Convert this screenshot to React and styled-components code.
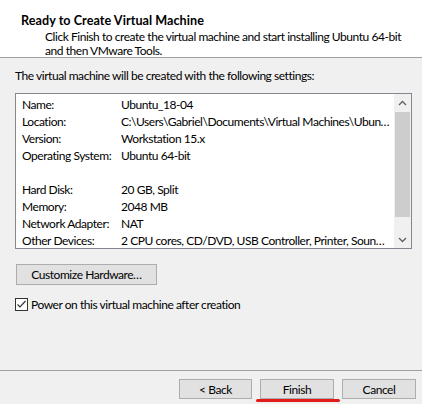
import React from "react";
import styled, { createGlobalStyle } from "styled-components";

const Global = createGlobalStyle`
  html, body { margin: 0; padding: 0; background: #f0f0f0; }
  body { font-family: Lato, "Noto Sans", sans-serif; font-size: 12px; letter-spacing: -0.45px; color: #000; }
`;

const Window = styled.div`
  width: 422px;
  height: 404px;
  display: flex;
  flex-direction: column;
  background: #f0f0f0;
  overflow: hidden;
`;

const Header = styled.header`
  height: 58px;
  box-sizing: border-box;
  background: #fff;
  border-bottom: 1px solid #a0a0a0;
  padding: 12px 0 0 21px;
  flex: none;
`;

const Title = styled.h1`
  margin: 0;
  font-size: 12.6px;
  font-weight: 700;
  letter-spacing: 0.05px;
  line-height: 18px;
  color: #000;
`;

const Desc = styled.p`
  margin: 0 0 0 24px;
  line-height: 14px;
  width: 360px;
`;

const Body = styled.main`
  flex: 1;
  display: flex;
  flex-direction: column;
  padding: 9px 10px 0 15px;
`;

const Intro = styled.div`
  line-height: 17px;
  margin-bottom: 9px;
`;

const ListBox = styled.div`
  height: 156px;
  box-sizing: border-box;
  border: 1px solid #828790;
  background: #fff;
  display: flex;
`;

const Rows = styled.div`
  flex: 1;
  min-width: 0;
  padding: 2px 3px 0 6px;
`;

const Row = styled.div`
  display: grid;
  grid-template-columns: 99px 1fr;
  height: 17px;
  line-height: 17px;
  white-space: nowrap;
`;

const Value = styled.span`
  overflow: hidden;
  text-overflow: ellipsis;
`;

const ScrollBar = styled.div`
  width: 17px;
  flex: none;
  display: flex;
  flex-direction: column;
  background: #f0f0f0;
`;

const Arrow = styled.div`
  height: 17px;
  flex: none;
  display: flex;
  align-items: center;
  justify-content: center;
`;

const Track = styled.div`
  flex: 1;
  display: flex;
  flex-direction: column;
  padding: 1px 1px 14px;
`;

const Thumb = styled.div`
  flex: 1;
  background: #cdcdcd;
`;

const Button = styled.button`
  box-sizing: border-box;
  height: ${(p) => p.$h || 20}px;
  width: ${(p) => p.$w}px;
  background: #e1e1e1;
  border: 1px solid #adadad;
  font-family: inherit;
  font-size: 12px;
  letter-spacing: inherit;
  color: #000;
  padding: 0;
  margin: 0;
`;

const CustomizeRow = styled.div`
  margin-top: 15px;
  padding-left: 1px;
`;

const CheckRow = styled.label`
  display: flex;
  align-items: center;
  gap: 3px;
  margin-top: 12px;
  line-height: 15px;
`;

const CheckBox = styled.span`
  width: 13px;
  height: 13px;
  box-sizing: border-box;
  border: 1px solid #333;
  background: #fff;
  display: flex;
  align-items: center;
  justify-content: center;
`;

const Footer = styled.footer`
  height: 34px;
  flex: none;
  box-sizing: border-box;
  border-top: 1px solid #a0a0a0;
  display: flex;
  justify-content: flex-end;
  gap: 8px;
  padding: 8px 6px 0 0;
`;

const Marked = styled.div`
  position: relative;
`;

const Underline = styled.div`
  position: absolute;
  left: -4px;
  right: -6px;
  top: 20px;
  height: 3px;
  border-radius: 2px;
  background: #e21b1b;
`;

const Up = () => (
  <svg width="9" height="6" viewBox="0 0 9 6">
    <path d="M1 5 L4.5 1.5 L8 5" fill="none" stroke="#606060" strokeWidth="1.3" />
  </svg>
);
const Down = () => (
  <svg width="9" height="6" viewBox="0 0 9 6">
    <path d="M1 1 L4.5 4.5 L8 1" fill="none" stroke="#606060" strokeWidth="1.3" />
  </svg>
);

const settings = [
  ["Name:", "Ubuntu_18-04"],
  ["Location:", "C:\\Users\\Gabriel\\Documents\\Virtual Machines\\Ubuntu_18-04"],
  ["Version:", "Workstation 15.x"],
  ["Operating System:", "Ubuntu 64-bit"],
  ["", ""],
  ["Hard Disk:", "20 GB, Split"],
  ["Memory:", "2048 MB"],
  ["Network Adapter:", "NAT"],
  ["Other Devices:", "2 CPU cores, CD/DVD, USB Controller, Printer, Sound Card"],
];

export default function App() {
  return (
    <Window>
      <Global />
      <Header>
        <Title>Ready to Create Virtual Machine</Title>
        <Desc>
          Click Finish to create the virtual machine and start installing Ubuntu 64-bit and then VMware Tools.
        </Desc>
      </Header>
      <Body>
        <Intro>The virtual machine will be created with the following settings:</Intro>
        <ListBox>
          <Rows>
            {settings.map(([k, v], i) => (
              <Row key={i}>
                <span>{k}</span>
                <Value>{v}</Value>
              </Row>
            ))}
          </Rows>
          <ScrollBar>
            <Arrow><Up /></Arrow>
            <Track><Thumb /></Track>
            <Arrow><Down /></Arrow>
          </ScrollBar>
        </ListBox>
        <CustomizeRow>
          <Button $w={141} $h={21}>Customize Hardware…</Button>
        </CustomizeRow>
        <CheckRow>
          <CheckBox>
            <svg width="11" height="11" viewBox="0 0 11 11">
              <path d="M1.5 5.5 L4 8 L9.5 2" fill="none" stroke="#333" strokeWidth="1.2" />
            </svg>
          </CheckBox>
          Power on this virtual machine after creation
        </CheckRow>
      </Body>
      <Footer>
        <Button $w={73}>&lt; Back</Button>
        <Marked>
          <Button $w={74}>Finish</Button>
          <Underline />
        </Marked>
        <Button $w={74}>Cancel</Button>
      </Footer>
    </Window>
  );
}
